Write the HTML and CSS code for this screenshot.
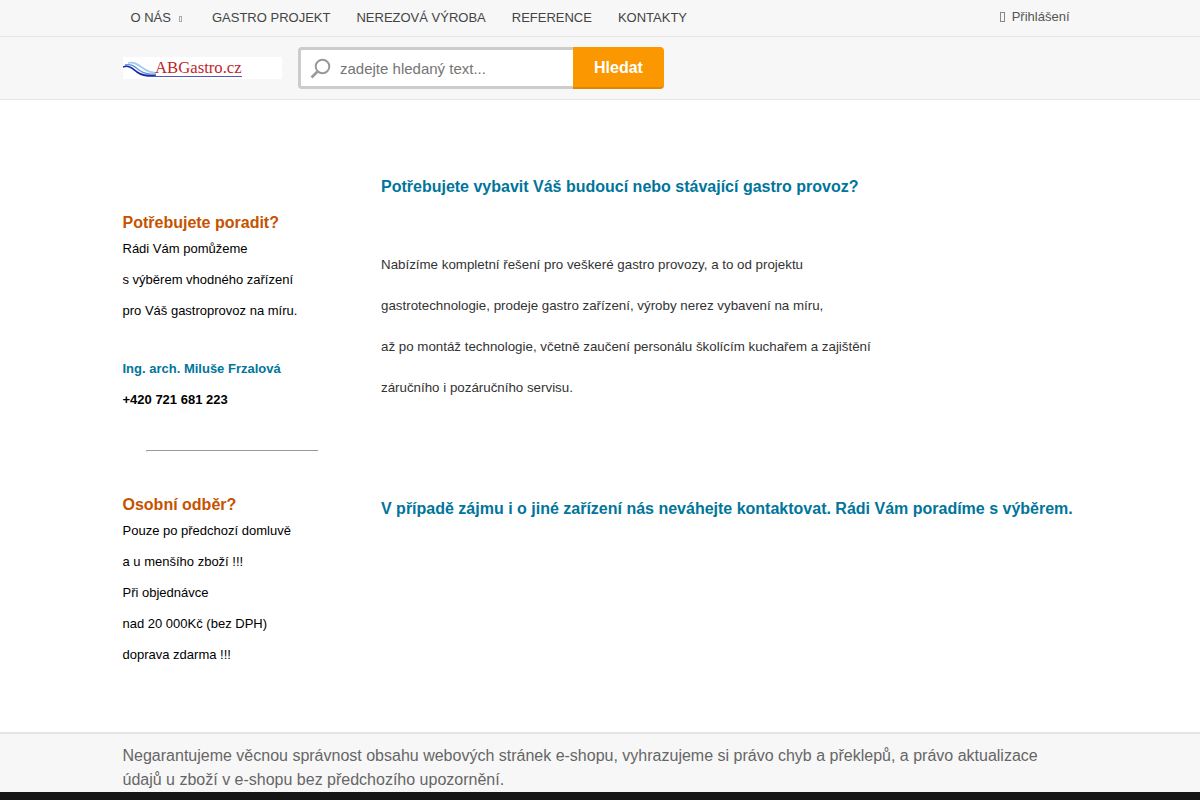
FILE: index.html
```html
<!DOCTYPE html>
<html lang="cs">
<head>
<meta charset="utf-8">
<title>ABGastro.cz</title>
<link rel="stylesheet" href="styles.css">
</head>
<body>
<div class="topbar">
  <div class="wrap topbar-in">
    <nav class="menu">
      <a class="menu-item">O NÁS<span class="caret"></span></a>
      <a class="menu-item">GASTRO PROJEKT</a>
      <a class="menu-item">NEREZOVÁ VÝROBA</a>
      <a class="menu-item">REFERENCE</a>
      <a class="menu-item">KONTAKTY</a>
    </nav>
    <a class="login"><span class="login-icon"></span>Přihlášení</a>
  </div>
</div>
<header class="header">
  <div class="wrap header-in">
    <div class="logo">
      <svg class="logo-waves" width="119" height="22" viewBox="0 0 119 22" aria-hidden="true">
        <path d="M5 6C11 4.5 15 7.5 19 10.5S26 15.5 33 16" fill="none" stroke="#a6cbec" stroke-width="1.8"/>
        <path d="M2 8C9 6.5 12 10 16 13S25 17.5 33 17.5" fill="none" stroke="#5f95dc" stroke-width="1.4"/>
        <path d="M0 10C6 7.5 10 12 14 15S22 19 33 19" fill="none" stroke="#1a2aa8" stroke-width="1.6"/>
        <path d="M30 19.5H119" stroke="#5a55b8" stroke-width="1.2" fill="none"/>
      </svg>
      <span class="logo-text">ABGastro.cz</span>
    </div>
    <form class="search">
      <div class="search-box">
        <svg class="search-icon" width="22" height="22" viewBox="0 0 22 22" aria-hidden="true">
          <circle cx="13.5" cy="9.5" r="6.8" fill="none" stroke="#999" stroke-width="2"/>
          <path d="M8.6 14.5L2.5 20.5" stroke="#999" stroke-width="2.6" fill="none"/>
        </svg>
        <span class="placeholder">zadejte hledaný text...</span>
      </div>
      <button class="search-btn" type="button">Hledat</button>
    </form>
  </div>
</header>
<main class="wrap main">
  <aside class="side">
    <h3 class="side-title first">Potřebujete poradit?</h3>
    <p>Rádi Vám pomůžeme</p>
    <p>s výběrem vhodného zařízení</p>
    <p>pro Váš gastroprovoz na míru.</p>
    <p class="side-name">Ing. arch. Miluše Frzalová</p>
    <p class="side-phone">+420 721 681 223</p>
    <hr class="side-rule">
    <h3 class="side-title">Osobní odběr?</h3>
    <p>Pouze po předchozí domluvě</p>
    <p>a u menšího zboží !!!</p>
    <p>Při objednávce</p>
    <p>nad 20 000Kč (bez DPH)</p>
    <p>doprava zdarma !!!</p>
  </aside>
  <section class="content">
    <h2 class="content-title">Potřebujete vybavit Váš budoucí nebo stávající gastro provoz?</h2>
    <div class="content-text">
      <p>Nabízíme kompletní řešení pro veškeré gastro provozy, a to od projektu</p>
      <p>gastrotechnologie, prodeje gastro zařízení, výroby nerez vybavení na míru,</p>
      <p>až po montáž technologie, včetně zaučení personálu školícím kuchařem a zajištění</p>
      <p>záručního i pozáručního servisu.</p>
    </div>
    <h2 class="content-title last">V případě zájmu i o jiné zařízení nás neváhejte kontaktovat. Rádi Vám poradíme s výběrem.</h2>
  </section>
</main>
<footer class="notice">
  <div class="wrap notice-in">Negarantujeme věcnou správnost obsahu webových stránek e-shopu, vyhrazujeme si právo chyb a překlepů, a právo aktualizace údajů u zboží v e-shopu bez předchozího upozornění.</div>
</footer>
<div class="blackbar"></div>
</body>
</html>
```
FILE: styles.css
```css
* { box-sizing: border-box; }
html, body { margin: 0; padding: 0; }
body {
  height: 800px;
  overflow: hidden;
  background: #fff;
  color: #333;
  font-family: "Liberation Sans", Arial, sans-serif;
  font-size: 13px;
}
.wrap { width: 955px; margin: 0 auto; }

.topbar { height: 37px; background: #f7f7f7; border-bottom: 1px solid #e5e5e5; }
.topbar-in { display: flex; justify-content: space-between; height: 36px; }
.menu { display: flex; padding-left: 8px; gap: 26px; }
.menu-item { font-size: 13px; line-height: 35px; color: #444; white-space: nowrap; }
.caret { display: inline-block; width: 3px; height: 6px; margin-left: 8px; margin-right: 4px; border: 1px solid #aaa; vertical-align: 0; }
.login { font-size: 13px; line-height: 33px; color: #555; padding-right: 8px; }
.login-icon { display: inline-block; width: 5px; height: 10px; margin-right: 7px; border: 1px solid #888; vertical-align: -1px; }

.header { height: 63px; background: #f7f7f7; border-bottom: 1px solid #e5e5e5; }
.header-in { display: flex; align-items: flex-start; }
.logo { width: 159.5px; height: 22px; margin-top: 20px; background: #fff; position: relative; flex: none; }
.logo-waves { position: absolute; left: 0; top: 0; }
.logo-text { position: absolute; left: 32.5px; top: 0; font-family: "Liberation Serif", serif; font-size: 16.7px; line-height: 22px; color: #c01f2b; white-space: nowrap; }
.search { display: flex; margin: 10px 0 0 16px; }
.search-box { width: 275px; height: 42px; background: #fff; border: 3px solid #ccc; border-right: 0; border-radius: 4px 0 0 4px; display: flex; align-items: center; }
.search-icon { margin-left: 8px; flex: none; }
.placeholder { margin-left: 9px; font-size: 15px; color: #757575; }
.search-btn { width: 91px; height: 42px; border: 0; border-bottom: 2px solid #e08600; border-radius: 0 4px 4px 0; background: #fb9700; color: #fff; font: bold 16px "Liberation Sans", Arial, sans-serif; padding: 2px 0 0; }

.main { display: flex; height: 632px; }
.side { width: 258.5px; flex: none; padding-top: 113px; color: #000; }
.side p { margin: 0; height: 31px; line-height: 19px; }
.side-title { margin: 0; font-size: 16px; line-height: 19px; height: 26px; color: #c55300; font-weight: bold; }
.side p.side-name { margin-top: 27px; color: #00759b; font-weight: bold; }
.side p.side-phone { font-weight: bold; }
.side-rule { width: 172px; height: 2px; margin: 29px 0 43px 23px; border: 0; border-top: 1px solid #999; border-left: 1px solid #ccc; }
.content { flex: 1; padding-top: 77px; }
.content-title { margin: 0; font-size: 16px; line-height: 19px; font-weight: bold; color: #00759b; white-space: nowrap; }
.content-text { margin-top: 59px; color: #333; }
.content-text p { margin: 0; height: 41px; line-height: 19px; font-size: 13.33px; }
.content-title.last { margin-top: 80px; }

.notice { height: 60px; background: #f7f7f7; border-top: 2px solid #e5e5e5; }
.notice-in { font-size: 16px; line-height: 24px; color: #666; padding-top: 10px; padding-right: 25px; height: 58px; overflow: hidden; }
.blackbar { height: 8px; background: #161616; }
```
